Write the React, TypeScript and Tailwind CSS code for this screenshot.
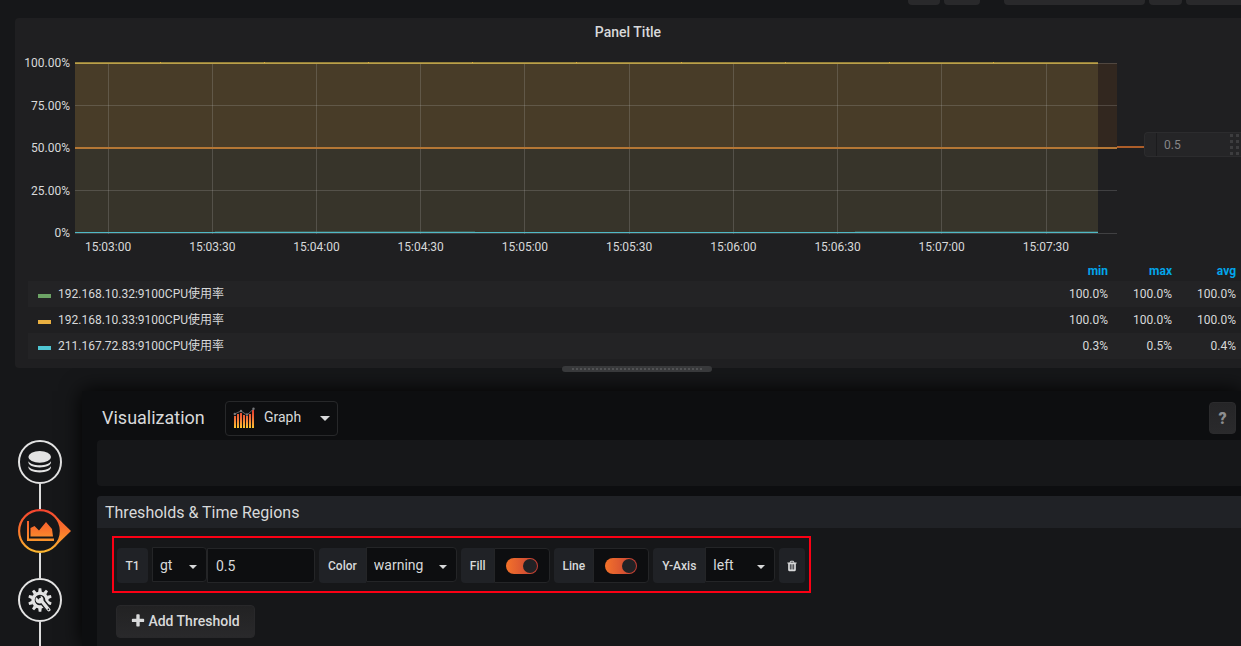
import { useState, type ReactNode } from "react";

const cpuSeries = [
  { name: "192.168.10.32:9100CPU使用率", swatch: "bg-[#6ca365]", min: "100.0%", max: "100.0%", avg: "100.0%" },
  { name: "192.168.10.33:9100CPU使用率", swatch: "bg-[#eab041]", min: "100.0%", max: "100.0%", avg: "100.0%" },
  { name: "211.167.72.83:9100CPU使用率", swatch: "bg-[#4fc6d3]", min: "0.3%", max: "0.5%", avg: "0.4%" },
];

const times = [
  "15:03:00", "15:03:30", "15:04:00", "15:04:30", "15:05:00",
  "15:05:30", "15:06:00", "15:06:30", "15:07:00", "15:07:30",
];
const percents = ["100.00%", "75.00%", "50.00%", "25.00%", "0%"];
const gridX = times.map((_, i) => Math.floor(33 + 104.23 * i));

function Plot() {
  return (
    <svg className="block h-[172px] w-full" viewBox="0 0 1042 172" preserveAspectRatio="none" shapeRendering="crispEdges" role="img" aria-label="CPU usage">
      <rect x="0" y="1" width="1023" height="170" fill="#37342a" />
      <rect x="0" y="1" width="1023" height="85" fill="#483c28" />
      <rect x="1023" y="1" width="19" height="85" fill="#32271f" />
      {[1, 43, 128, 171].map((y) => (
        <rect key={y} x="0" y={y} width="1042" height="1" fill="#c8c8c8" fillOpacity="0.2" />
      ))}
      {gridX.map((x) => (
        <rect key={x} x={x} y="1" width="1" height="171" fill="#c8c8c8" fillOpacity="0.2" />
      ))}
      <rect x="0" y="0" width="1023" height="1" fill="#94803a" />
      <rect x="0" y="1" width="1023" height="1" fill="#bba04a" />
      {gridX.slice(0, 9).map((x) => (
        <rect key={x} x={x + 52} y="0" width="1" height="1" fill="#dbaa36" />
      ))}
      <rect x="0" y="85" width="1042" height="2" fill="#b57735" />
      <rect x="0" y="170" width="1023" height="1" fill="#4fb9c6" />
      <rect x="140" y="169" width="260" height="1" fill="#4d8a84" fillOpacity="0.4" />
      <rect x="780" y="169" width="243" height="1" fill="#4d8a84" fillOpacity="0.4" />
    </svg>
  );
}

function Caret({ size = "h-1 w-2" }: { size?: string }) {
  return (
    <svg className={`pointer-events-none ${size}`} viewBox="0 0 8 4" aria-hidden="true">
      <path d="M0 0h8L4 4z" fill="#d8d9da" />
    </svg>
  );
}

function GraphIcon() {
  const tops = [9, 7, 6, 8, 9, 7, 3];
  return (
    <svg className="h-[22px] w-[22px]" viewBox="0 0 22 22" aria-hidden="true">
      <defs>
        <linearGradient id="bars" gradientUnits="userSpaceOnUse" x1="0" y1="3" x2="0" y2="21">
          <stop offset="0" stopColor="#e23b2e" />
          <stop offset="0.5" stopColor="#f4743a" />
          <stop offset="1" stopColor="#fcc62f" />
        </linearGradient>
      </defs>
      {tops.map((t, i) => (
        <rect key={i} x={1 + i * 3} y={t} width="2" height={21 - t} fill="url(#bars)" />
      ))}
      <path d="M1.5 7 8 4l6 4 6.500-6" fill="none" stroke="#77787b" strokeWidth="0.8" />
      {[[1.8, 7], [8, 4], [14, 7.5], [20.500, 1.800]].map(([x, y]) => (
        <circle key={x} cx={x} cy={y} r="1.200" fill="#77787b" />
      ))}
    </svg>
  );
}

function DatabaseIcon() {
  return (
    <svg className="h-6 w-6" viewBox="0 0 24 24" fill="#e3e3e3" aria-hidden="true">
      <ellipse cx="11.700" cy="6.900" rx="11.300" ry="5.900" />
      <path d="M.4 11.200c1.700 2.500 6 4.100 11.300 4.100s9.600-1.600 11.300-4.100v1.100c0 3-5 5.200-11.300 5.200S.4 15.300.4 12.300z" />
      <path d="M.4 16.200c1.700 2.500 6 4.100 11.300 4.100s9.600-1.600 11.300-4.100v1.100c0 3-5 5.200-11.300 5.200S.4 20.300.4 17.300z" />
    </svg>
  );
}

function GearWrenchIcon() {
  return (
    <svg className="h-6 w-6" viewBox="0 0 24 24" aria-hidden="true">
      <g fill="#e3e3e3">
        {[0, 36, 72, 108, 144, 180, 216, 252, 288, 324].map((a) => (
          <path key={a} d="M10.200 4 10.700.2h2.600l.5 3.800z" transform={`rotate(${a} 12 12)`} />
        ))}
        <circle cx="12" cy="12" r="8.600" />
      </g>
      <circle cx="12" cy="12" r="5.300" fill="#161719" />
      <path d="m13 12 9 11" stroke="#161719" strokeWidth="6" />
      <path d="m12.500 11.500 8.300 10.300" stroke="#e3e3e3" strokeWidth="3.400" strokeLinecap="round" />
      <path d="M8.200 9.300a4 4 0 1 0 4.300-1.600l.6 3-1.800 1.400z" fill="#e3e3e3" />
      <circle cx="20.400" cy="21.400" r=".8" fill="#161719" />
    </svg>
  );
}

function ActiveTabIcon() {
  return (
    <svg className="h-11 w-[53px]" viewBox="0 0 53 44" aria-hidden="true">
      <defs>
        <linearGradient id="flame" gradientUnits="userSpaceOnUse" x1="0" y1="0" x2="0" y2="44">
          <stop offset="0" stopColor="#f5422f" />
          <stop offset="0.5" stopColor="#f9772c" />
          <stop offset="1" stopColor="#fbb92f" />
        </linearGradient>
      </defs>
      <path d="M37 6.500 53 22 37 37.500z" fill="url(#flame)" />
      <circle cx="22" cy="22" r="20.900" fill="#161719" stroke="url(#flame)" strokeWidth="2.200" />
      <path d="M9 12h2v17.500h25V32H9z" fill="url(#flame)" />
      <path d="M12.500 27.500V19l4-2 4.500 4.500L28 13l6 7 1 7.500z" fill="url(#flame)" />
    </svg>
  );
}

function TrashIcon() {
  return (
    <svg className="h-3 w-3" viewBox="0 0 1792 1792" fill="#d8d9da" aria-hidden="true">
      <path d="M704 1376v-704q0-14-9-23t-23-9h-64q-14 0-23 9t-9 23v704q0 14 9 23t23 9h64q14 0 23-9t9-23zm256 0v-704q0-14-9-23t-23-9h-64q-14 0-23 9t-9 23v704q0 14 9 23t23 9h64q14 0 23-9t9-23zm256 0v-704q0-14-9-23t-23-9h-64q-14 0-23 9t-9 23v704q0 14 9 23t23 9h64q14 0 23-9t9-23zm-544-992h448l-48-117q-7-9-17-11h-317q-10 2-17 11zm928 32v64q0 14-9 23t-23 9h-96v948q0 83-47 143.500t-113 60.500h-832q-66 0-113-58.500t-47-141.500v-952h-96q-14 0-23-9t-9-23v-64q0-14 9-23t23-9h309l70-167q15-37 54-63t79-26h320q40 0 79 26t54 63l70 167h309q14 0 23 9t9 23z" />
    </svg>
  );
}

function PlusIcon() {
  return (
    <svg className="h-[14px] w-[14px]" viewBox="96 96 1600 1600" fill="#d8d9da" aria-hidden="true">
      <path d="M1600 736v192q0 40-28 68t-68 28h-416v416q0 40-28 68t-68 28h-192q-40 0-68-28t-28-68v-416h-416q-40 0-68-28t-28-68v-192q0-40 28-68t68-28h416v-416q0-40 28-68t68-28h192q40 0 68 28t28 68v416h416q40 0 68 28t28 68z" />
    </svg>
  );
}

const labelClass = "flex h-[35px] items-center rounded-l-sm bg-[#202226] text-xs font-medium";
const fieldClass = "h-[35px] rounded-r-sm border border-[#242527] bg-[#0d0e10] text-sm text-[#d8d9da]";

function SelectField({ id, name, options, width }: { id: string; name?: string; options: string[]; width: string }) {
  return (
    <div className={`relative flex items-center ${width}`}>
      <select id={id} aria-label={name} className={`${fieldClass} w-full appearance-none pt-px pl-[7px]`}>
        {options.map((o) => (
          <option key={o}>{o}</option>
        ))}
      </select>
      <span className="pointer-events-none absolute right-[10px] flex pt-1">
        <Caret />
      </span>
    </div>
  );
}

function SwitchField({ id, label }: { id: string; label: string }) {
  const [on, setOn] = useState(true);
  return (
    <div className="flex">
      <label htmlFor={id} className={`${labelClass} pr-2 pl-[9px]`}>{label}</label>
      <span className={`${fieldClass} flex w-14 items-center justify-center`}>
        <input
          id={id}
          type="checkbox"
          checked={on}
          onChange={(e) => setOn(e.target.checked)}
          className="flex h-4 w-8 appearance-none items-center justify-start rounded-full bg-[#34363a] px-px before:h-[14px] before:w-[14px] before:rounded-full before:bg-[#222225] checked:justify-end checked:bg-linear-to-r checked:from-[#f47229] checked:to-[#c23b34]"
        />
      </span>
    </div>
  );
}

function TabButton({ label, children }: { label: string; children: ReactNode }) {
  return (
    <button aria-label={label} className="flex h-11 w-11 shrink-0 items-center justify-center rounded-full border-2 border-[#e3e3e3] bg-[#161719]">
      {children}
    </button>
  );
}

export default function App() {
  const [threshold, setThreshold] = useState("0.5");
  return (
    <div className="flex h-screen min-w-[900px] flex-col overflow-hidden bg-[#161719] font-['Roboto','Noto_Sans_CJK_SC',sans-serif] text-[#d8d9da]">
      <header className="flex h-[5px] shrink-0 justify-end gap-1">
        <div className="w-8 rounded-b-sm bg-[#29292b]" />
        <div className="mr-5 w-9 rounded-b-sm bg-[#29292b]" />
        <div className="w-[141px] rounded-b-sm bg-[#29292b]" />
        <div className="w-[33px] rounded-b-sm bg-[#29292b]" />
        <div className="w-[55px] rounded-bl-sm bg-[#29292b]" />
      </header>

      <section className="relative mt-[13px] ml-[15px] shrink-0 rounded-l-sm bg-[#1f1f21] pb-[9px]">
        <h1 className="h-[37px] text-center text-sm leading-7 font-medium">Panel Title</h1>
        <div className="flex">
          <div className="flex h-[186px] w-[60px] flex-col justify-between pr-[5px] text-right text-xs leading-4">
            {percents.map((p) => (
              <span key={p}>{p}</span>
            ))}
          </div>
          <div className="flex-1 pt-[7px]">
            <Plot />
            <div className="mt-[5px] mr-[19px] -ml-[19px] flex text-center text-xs leading-4">
              {times.map((t) => (
                <span key={t} className="flex-1">{t}</span>
              ))}
            </div>
          </div>
          <div className="mt-[77px] flex h-[25px] w-[124px] items-center">
            <div className="mt-1 h-[2px] w-[27px] bg-[#ac5d29]" />
            <div className="flex h-full flex-1 rounded-l border border-r-0 border-[#2c2c2e] bg-[#252527]">
              <div className="w-3 border-r border-[#1b1b1d]" />
              <span className="flex-1 pl-[7px] text-xs leading-6 text-[#868788]">0.5</span>
              <div className="grid w-[11px] grid-cols-2 content-evenly gap-y-[2px]">
                {Array.from({ length: 8 }, (_, i) => (
                  <i key={i} className="h-[3px] w-[3px] bg-[#3d3d3f]" />
                ))}
              </div>
            </div>
          </div>
        </div>

        <div className="mt-[6px] ml-[13px]">
          <table className="w-full table-fixed border-collapse text-xs">
            <thead>
              <tr className="h-5 text-right text-[#02a5ea]">
                <th scope="col" aria-label="Series" />
                <th scope="col" className="w-16 p-0 text-right font-bold">min</th>
                <th scope="col" className="w-16 p-0 text-right font-bold">max</th>
                <th scope="col" className="w-[69px] p-0 pr-[5px] text-right font-bold">avg</th>
              </tr>
            </thead>
            <tbody>
              {cpuSeries.map((s) => (
                <tr key={s.name} className="h-[26px] odd:bg-[#232325]">
                  <td className="p-0 pl-[10px]">
                    <span className="flex items-center gap-[7px]">
                      <i className={`mt-1 h-1 w-[13px] ${s.swatch}`} />
                      {s.name}
                    </span>
                  </td>
                  <td className="p-0 text-right">{s.min}</td>
                  <td className="p-0 text-right">{s.max}</td>
                  <td className="p-0 pr-[5px] text-right">{s.avg}</td>
                </tr>
              ))}
            </tbody>
          </table>
        </div>
        <div className="absolute inset-x-0 -bottom-1 z-10 flex justify-center pl-[18px]">
          <div className="flex h-[6px] w-[150px] items-center rounded-full bg-[#38393b] px-[10px]">
            <svg className="h-[2px] w-full" aria-hidden="true">
              <path d="M0 1h130" stroke="#515254" strokeWidth="2" strokeDasharray="2 2" />
            </svg>
          </div>
        </div>
      </section>

      <div className="flex min-h-0 flex-1">
        <nav className="flex w-[82px] shrink-0 flex-col items-start pt-[72px] pl-[18px]">
          <TabButton label="Queries"><DatabaseIcon /></TabButton>
          <div className="ml-[21px] h-[25px] w-[2px] shrink-0 bg-[#dcdcdc]" />
          <button aria-label="Visualization" className="relative z-10 flex shrink-0"><ActiveTabIcon /></button>
          <div className="ml-[21px] h-[25px] w-[2px] shrink-0 bg-[#dcdcdc]" />
          <TabButton label="General"><GearWrenchIcon /></TabButton>
          <div className="ml-[21px] w-[2px] flex-1 bg-[#dcdcdc]" />
        </nav>

        <main className="mt-[23px] flex flex-1 flex-col bg-[#0d0e10] pt-[10px] pl-[15px] shadow-[0_0_20px_#000000]">
          <div className="flex h-[39px] shrink-0 items-start pr-[5px] pl-[5px]">
            <h2 className="w-[123px] text-lg leading-[34px]">Visualization</h2>
            <button className="flex h-[35px] w-[113px] items-center rounded-sm border border-[#27282a] pr-[7px] pb-[2px] pl-[7px] text-sm">
              <GraphIcon />
              <span className="flex-1 pb-px pl-[9px] text-left">Graph</span>
              <Caret size="mt-[2px] h-[5px] w-[10px]" />
            </button>
            <button aria-label="Help" className="mt-px ml-auto flex h-8 w-[27px] items-center justify-center rounded-sm border border-[#2b2b2d] bg-linear-to-b from-[#252527] to-[#2a2a2c] pt-[2px] text-base font-black text-[#8d8e90]">?</button>
          </div>
          <div className="h-[46px] shrink-0 rounded-l-sm bg-[#161719]" />

          <section className="mt-[10px] flex-1 rounded-tl-sm bg-[#161719]">
            <h3 className="h-8 rounded-tl-sm bg-[#202226] pl-2 text-base leading-[33px]">Thresholds &amp; Time Regions</h3>
            <div className="mt-2 ml-[15px] flex h-[57px] w-max gap-1 border-2 border-[#fb0014] py-[10px] pr-1 pl-[3px]">
              <span className="flex h-[35px] w-[31px] items-center justify-center rounded-sm bg-[#202226] text-xs font-medium">T1</span>
              <div className="flex">
                <SelectField id="operator" name="Operator" options={["gt", "lt"]} width="w-[55px]" />
                <input
                  aria-label="Threshold value"
                  value={threshold}
                  onChange={(e) => setThreshold(e.target.value)}
                  className={`${fieldClass} w-[108px] pt-px pl-2`}
                />
              </div>
              <div className="flex">
                <label htmlFor="color" className={`${labelClass} px-[9px]`}>Color</label>
                <SelectField id="color" options={["warning", "critical", "ok", "custom"]} width="w-[91px]" />
              </div>
              <SwitchField id="fill" label="Fill" />
              <SwitchField id="line" label="Line" />
              <div className="flex">
                <label htmlFor="axis" className={`${labelClass} px-[9px]`}>Y-Axis</label>
                <SelectField id="axis" options={["left", "right"]} width="w-[70px]" />
              </div>
              <button aria-label="Remove threshold" className="flex h-[35px] w-[26px] items-center justify-center rounded-sm bg-[#202226]">
                <TrashIcon />
              </button>
            </div>
            <button className="mt-3 ml-[19px] flex h-[33px] w-[139px] items-center justify-center gap-[3px] rounded-sm border border-[#28282a] bg-linear-to-b from-[#222223] to-[#29292b] pb-px text-sm font-medium">
              <PlusIcon />
              Add Threshold
            </button>
          </section>
        </main>
      </div>
    </div>
  );
}
